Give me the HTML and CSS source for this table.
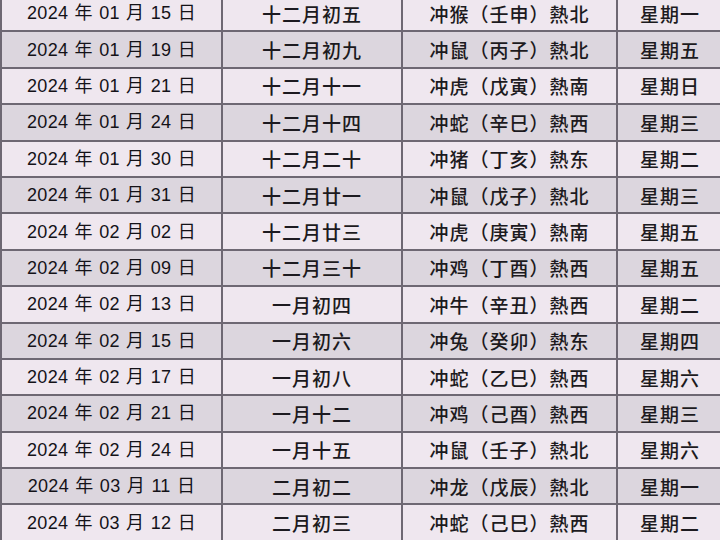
FILE: index.html
```html
<!DOCTYPE html>
<html lang="zh">
<head>
<meta charset="utf-8">
<link rel="stylesheet" href="styles.css">
</head>
<body>
<div class="sheet">
<table class="cal">
<colgroup><col class="c1"><col class="c2"><col class="c3"><col class="c4"></colgroup>
<tbody>
<tr><td class="d">2024 年 01 月 15 日</td><td>十二月初五</td><td>冲猴（壬申）熱北</td><td>星期一</td></tr>
<tr><td class="d">2024 年 01 月 19 日</td><td>十二月初九</td><td>冲鼠（丙子）熱北</td><td>星期五</td></tr>
<tr><td class="d">2024 年 01 月 21 日</td><td>十二月十一</td><td>冲虎（戊寅）熱南</td><td>星期日</td></tr>
<tr><td class="d">2024 年 01 月 24 日</td><td>十二月十四</td><td>冲蛇（辛巳）熱西</td><td>星期三</td></tr>
<tr><td class="d">2024 年 01 月 30 日</td><td>十二月二十</td><td>冲猪（丁亥）熱东</td><td>星期二</td></tr>
<tr><td class="d">2024 年 01 月 31 日</td><td>十二月廿一</td><td>冲鼠（戊子）熱北</td><td>星期三</td></tr>
<tr><td class="d">2024 年 02 月 02 日</td><td>十二月廿三</td><td>冲虎（庚寅）熱南</td><td>星期五</td></tr>
<tr><td class="d">2024 年 02 月 09 日</td><td>十二月三十</td><td>冲鸡（丁酉）熱西</td><td>星期五</td></tr>
<tr><td class="d">2024 年 02 月 13 日</td><td>一月初四</td><td>冲牛（辛丑）熱西</td><td>星期二</td></tr>
<tr><td class="d">2024 年 02 月 15 日</td><td>一月初六</td><td>冲兔（癸卯）熱东</td><td>星期四</td></tr>
<tr><td class="d">2024 年 02 月 17 日</td><td>一月初八</td><td>冲蛇（乙巳）熱西</td><td>星期六</td></tr>
<tr><td class="d">2024 年 02 月 21 日</td><td>一月十二</td><td>冲鸡（己酉）熱西</td><td>星期三</td></tr>
<tr><td class="d">2024 年 02 月 24 日</td><td>一月十五</td><td>冲鼠（壬子）熱北</td><td>星期六</td></tr>
<tr><td class="d">2024 年 03 月 11 日</td><td>二月初二</td><td>冲龙（戊辰）熱北</td><td>星期一</td></tr>
<tr><td class="d">2024 年 03 月 12 日</td><td>二月初三</td><td>冲蛇（己巳）熱西</td><td>星期二</td></tr>
</tbody>
</table>
</div>
</body>
</html>
```

FILE: styles.css
```css
html, body {
  margin: 0;
  padding: 0;
  width: 720px;
  height: 540px;
  overflow: hidden;
  background: #ece4ec;
}
.sheet {
  width: 720px;
  height: 540px;
  overflow: hidden;
}
.cal {
  border-collapse: collapse;
  table-layout: fixed;
  width: 722px;
  margin-top: -6px;
  margin-left: 0;
  color: #1c1a20;
  font-family: "Noto Sans CJK SC", "Liberation Sans", sans-serif;
  font-size: 19px;
  font-weight: 500;
}
.c1 { width: 221px; }
.c2 { width: 180px; }
.c3 { width: 215px; }
.c4 { width: 106px; }
.cal td {
  height: 34.4px;
  padding: 0;
  border: 2px solid #6e6873;
  text-align: center;
  vertical-align: middle;
  letter-spacing: 1px;
  white-space: nowrap;
  line-height: 1;
}
.cal tr:nth-child(odd) td { background: #efe7ef; }
.cal tr:nth-child(even) td { background: #dcd6de; }
.cal td.d {
  font-family: "Liberation Sans", "Noto Sans CJK SC", sans-serif;
  font-size: 18px;
  font-weight: 400;
  letter-spacing: 0.3px;
  word-spacing: 1px;
  color: #141218;
}
```
